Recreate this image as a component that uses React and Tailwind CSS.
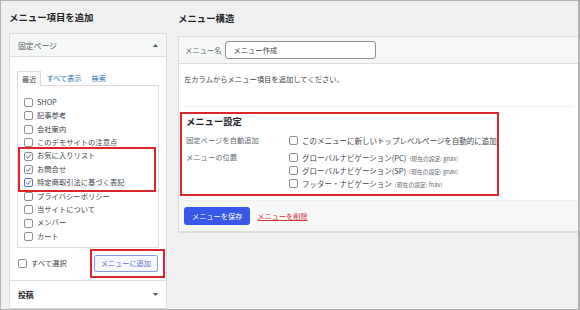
const font = { fontFamily: '"Noto Sans CJK JP", "Noto Sans", sans-serif' };

const pages = [
    { label: 'SHOP' },
    { label: '記事参考' },
    { label: '会社案内' },
    { label: 'このデモサイトの注意点' },
];
const picked = [
    { label: 'お気に入りリスト', checked: true },
    { label: 'お問合せ', checked: true },
    { label: '特定商取引法に基づく表記', checked: true, focus: true },
];
const rest = [
    { label: 'プライバシーポリシー' },
    { label: '当サイトについて' },
    { label: 'メンバー' },
    { label: 'カート' },
];

function Box({ checked, focus }) {
    return (
        <span className={`w-[9px] h-[9px] shrink-0 rounded-[2px] border bg-white flex items-center justify-center ${focus ? 'border-[#5a6fe0]' : 'border-[#8c8f94]'}`}>
            {checked && (
                <svg width="7" height="7" viewBox="0 0 10 10">
                    <path d="M1.5 5.2 L4 7.6 L8.6 2" fill="none" stroke={focus ? '#4a5a9a' : '#50575e'} strokeWidth="1.4" />
                </svg>
            )}
        </span>
    );
}

function Item({ label, checked, focus, inset }) {
    return (
        <div className={`flex items-center h-[13.4px] gap-[4px] ${inset ? 'pl-[4px]' : 'pl-[6px]'}`}>
            <Box checked={checked} focus={focus} />
            <span className="text-[7.3px] text-[#3c434a] leading-none">{label}</span>
        </div>
    );
}

function Caret({ down }) {
    return (
        <svg width="5" height="3" viewBox="0 0 5 3">
            <path d={down ? 'M0 0 L5 0 L2.5 3 Z' : 'M0 3 L5 3 L2.5 0 Z'} fill="#50575e" />
        </svg>
    );
}

function Option({ label, note }) {
    return (
        <div className="flex items-center h-[13px] gap-[4px]">
            <Box />
            <span className="text-[7.5px] text-[#3c434a] leading-none">
                {label}
                {note && <span className="text-[5.8px] text-[#646970] ml-[3px]">{note}</span>}
            </span>
        </div>
    );
}

export default function App() {
    return (
        <div style={font} className="w-[580px] h-[310px] border border-[#b3b3b3] border-r-2 bg-[#f0f0f1] overflow-hidden flex pl-[8px] gap-[11px]">

            {/* left: add items */}
            <div className="w-[158px] shrink-0 flex flex-col">
                <div className="h-[35px] flex items-center text-[9.4px] font-bold text-[#1d2327]">メニュー項目を追加</div>
                <div className="border border-[#dcdcde] bg-white">
                    <div className="h-[23px] border-b border-[#dcdcde] bg-[#f6f7f7] flex items-center justify-between pl-[8px] pr-[8px]">
                        <span className="text-[7.8px] text-[#50575e]">固定ページ</span>
                        <Caret />
                    </div>
                    <div className="pt-[13px] pl-[7px] pr-[7px]">
                        <div className="flex items-end text-[7.2px] leading-none">
                            <span className="h-[15px] px-[4px] border border-b-0 border-[#dcdcde] flex items-center text-[#3c434a] relative top-[1px] bg-white">最近</span>
                            <span className="ml-[5px] h-[14px] flex items-center text-[#2271b1]">すべて表示</span>
                            <span className="ml-[10px] h-[14px] flex items-center text-[#2271b1]">検索</span>
                        </div>
                        <div className="border border-[#dcdcde] pt-[9.5px] pb-[4px]">
                            {pages.map((p) => <Item key={p.label} {...p} />)}
                            <div className="border-2 border-[#d9252b] -my-[2px] mr-[2px]">
                                {picked.map((p) => <Item key={p.label} {...p} inset />)}
                            </div>
                            {rest.map((p) => <Item key={p.label} {...p} />)}
                        </div>
                    </div>
                    <div className="flex items-center justify-between pl-[8px] pr-[1px] pt-[1px] pb-[2px]">
                        <div className="flex items-center gap-[4px]">
                            <Box />
                            <span className="text-[7.3px] text-[#3c434a]">すべて選択</span>
                        </div>
                        <div className="border-2 border-[#d9252b] pt-[4px] pb-[4px] pl-[2px] pr-[5px]">
                            <div className="h-[17px] px-[6px] rounded-[2px] border border-[#8d9be8] bg-[#f6f7fb] flex items-center text-[7.2px] text-[#5d6dd6]">メニューに追加</div>
                        </div>
                    </div>
                </div>
                <div className="border border-t-0 border-[#dcdcde] bg-white h-[30px] flex items-center justify-between pl-[8px] pr-[8px]">
                    <span className="text-[7.8px] font-bold text-[#1d2327]">投稿</span>
                    <Caret down />
                </div>
            </div>

            {/* right: menu structure */}
            <div className="flex-1 flex flex-col">
                <div className="h-[35px] flex items-center text-[9.4px] font-bold text-[#1d2327]">メニュー構造</div>
                <div className="border border-[#dcdcde] border-r-0 bg-white">
                    <div className="h-[27px] border-b border-[#dcdcde] bg-[#f6f7f7] flex items-center pl-[6px] gap-[4px]">
                        <span className="text-[7.3px] text-[#646970]">メニュー名</span>
                        <div className="w-[151px] h-[18px] rounded-[3px] border border-[#8c8f94] bg-white flex items-center pl-[7px] text-[7.3px] text-[#3c434a]">メニュー作成</div>
                    </div>
                    <div className="px-[5px] pt-[10px]">
                        <div className="text-[7.3px] leading-[10px] text-[#3c434a]">左カラムからメニュー項目を追加してください。</div>
                        <div className="mt-[22px] border-t border-[#f0f0f1]" />
                        <div className="-ml-[4px] w-[319px] mt-[5px] mb-[4px] border-2 border-[#d9252b] pl-[4px] pt-[1px] pb-[4px]">
                            <div className="text-[9.3px] font-bold text-[#1d2327] leading-[13px]">メニュー設定</div>
                            <div className="flex mt-[6px]">
                                <div className="w-[103px] text-[7.3px] text-[#646970] flex flex-col">
                                    <span className="h-[13px] flex items-center">固定ページを自動追加</span>
                                    <span className="h-[13px] mt-[4px] flex items-center">メニューの位置</span>
                                </div>
                                <div className="flex flex-col">
                                    <Option label="このメニューに新しいトップレベルページを自動的に追加" />
                                    <div className="mt-[4px]">
                                        <Option label="グローバルナビゲーション(PC)" note="(現在の設定: gnav)" />
                                        <Option label="グローバルナビゲーション(SP)" note="(現在の設定: gnav)" />
                                        <Option label="フッター・ナビゲーション" note="(現在の設定: fnav)" />
                                    </div>
                                </div>
                            </div>
                        </div>
                    </div>
                    <div className="h-[31px] border-t border-[#f0f0f1] bg-[#f6f7f7] flex items-center pl-[5px] gap-[7px]">
                        <div className="h-[18px] px-[8px] rounded-[3px] bg-[#3858e9] flex items-center text-[7.2px] text-white">メニューを保存</div>
                        <span className="text-[7.2px] text-[#d63638] underline">メニューを削除</span>
                    </div>
                </div>
                <div className="border-t border-[#dcdcde]" />
            </div>
        </div>
    );
}
